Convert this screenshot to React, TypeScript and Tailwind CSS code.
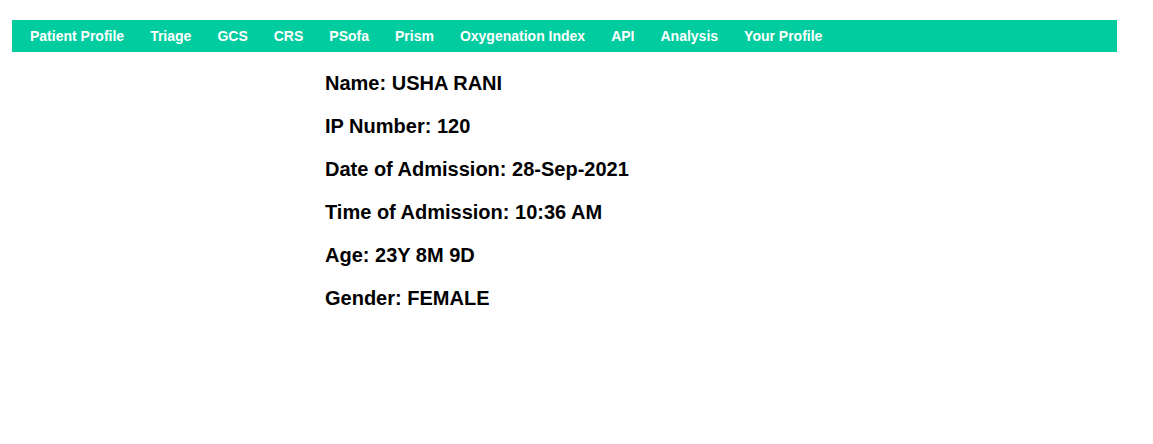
const tabs = [
  "Patient Profile",
  "Triage",
  "GCS",
  "CRS",
  "PSofa",
  "Prism",
  "Oxygenation Index",
  "API",
  "Analysis",
  "Your Profile",
]

const details = [
  ["Name", "USHA RANI"],
  ["IP Number", "120"],
  ["Date of Admission", "28-Sep-2021"],
  ["Time of Admission", "10:36 AM"],
  ["Age", "23Y 8M 9D"],
  ["Gender", "FEMALE"],
]

export default function App() {
  return (
    <div className="min-h-[444px] bg-white font-['Liberation_Sans',Arial,sans-serif] pt-5">
      <nav className="ml-3 w-[1105px] h-8 bg-[#00cca0]">
        <ul className="flex h-full items-center pl-[5px]">
          {tabs.map((t) => (
            <li key={t} className="px-[13px] text-[14px] font-bold text-white leading-8 cursor-pointer">
              {t}
            </li>
          ))}
        </ul>
      </nav>
      <div className="pl-[325px] pt-[20px] flex flex-col gap-5">
        {details.map(([k, v]) => (
          <p key={k} className="text-[20px] leading-[23px] font-bold text-black">
            {k}: {v}
          </p>
        ))}
      </div>
    </div>
  )
}
